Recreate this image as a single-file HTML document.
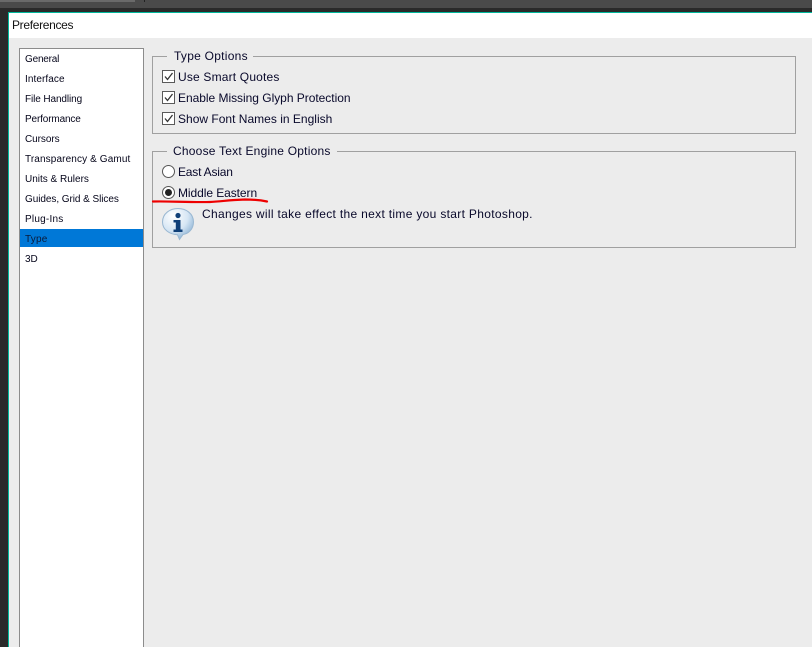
<!DOCTYPE html>
<html><head><meta charset="utf-8">
<style>
html,body{margin:0;padding:0;}
body{width:812px;height:647px;overflow:hidden;position:relative;background:#2a2a2a;font-family:"Liberation Sans",sans-serif;color:#000;}
.a{position:absolute;box-sizing:border-box;}
.t{position:absolute;white-space:nowrap;font-size:12px;line-height:14px;color:#08082a;}
.l{position:absolute;left:25px;white-space:nowrap;font-size:10px;line-height:12px;color:#05051a;}
.g{position:absolute;border:1px solid #a0a0a0;box-sizing:border-box;}
.c{position:absolute;left:162px;width:13px;height:13px;box-sizing:border-box;border:1px solid #5a5a5a;background:#fff;}
</style></head><body>
<div class="a" style="left:0;top:0;width:812px;height:8px;background:#4a4a4a"></div>
<div class="a" style="left:0;top:0;width:135px;height:2px;background:#6a6a6a"></div>
<div class="a" style="left:144px;top:0;width:1px;height:2px;background:#222"></div>
<div class="a" style="left:0;top:8px;width:812px;height:4px;background:#2a2a2a"></div>
<div class="a" style="left:8px;top:12px;width:804px;height:635px;background:#ececec;border-left:1px solid #00b89c;border-top:1px solid #00b89c"></div>
<div class="a" style="left:9px;top:13px;width:803px;height:25px;background:#fff"></div>
<div class="t" style="left:12px;top:18px;letter-spacing:-.32px;color:#111">Preferences</div>

<div class="a" style="left:19px;top:48px;width:125px;height:599px;background:#fff;border:1px solid #8c8c8c;border-bottom:0"></div>
<div class="a" style="left:20px;top:229px;width:123px;height:18px;background:#0078d7"></div>
<div class="l" style="top:54px;letter-spacing:-.2px">General</div>
<div class="l" style="top:74px;letter-spacing:.08px">Interface</div>
<div class="l" style="top:94px;letter-spacing:-.1px">File Handling</div>
<div class="l" style="top:114px;letter-spacing:-.14px">Performance</div>
<div class="l" style="top:134px;letter-spacing:-.06px">Cursors</div>
<div class="l" style="top:154px;letter-spacing:.12px">Transparency &amp; Gamut</div>
<div class="l" style="top:174px;letter-spacing:0">Units &amp; Rulers</div>
<div class="l" style="top:194px;letter-spacing:-.06px">Guides, Grid &amp; Slices</div>
<div class="l" style="top:214px;letter-spacing:.22px">Plug-Ins</div>
<div class="l" style="top:234px;letter-spacing:.22px;color:#0a1a3a">Type</div>
<div class="l" style="top:254px;letter-spacing:0">3D</div>

<div class="g" style="left:152px;top:56px;width:644px;height:78px"></div>
<div class="a" style="left:167px;top:50px;width:86px;height:12px;background:#ececec"></div>
<div class="t" style="left:174px;top:49px;letter-spacing:.26px">Type Options</div>

<div class="c" style="top:70px"><svg width="11" height="11" style="display:block"><path d="M2 5.5L4.5 8.5L9.5 2" fill="none" stroke="#333" stroke-width="1.3"/></svg></div>
<div class="c" style="top:91px"><svg width="11" height="11" style="display:block"><path d="M2 5.5L4.5 8.5L9.5 2" fill="none" stroke="#333" stroke-width="1.3"/></svg></div>
<div class="c" style="top:112px"><svg width="11" height="11" style="display:block"><path d="M2 5.5L4.5 8.5L9.5 2" fill="none" stroke="#333" stroke-width="1.3"/></svg></div>
<div class="t" style="left:178px;top:70px;letter-spacing:.18px">Use Smart Quotes</div>
<div class="t" style="left:178px;top:91px;letter-spacing:-.03px">Enable Missing Glyph Protection</div>
<div class="t" style="left:178px;top:112px;letter-spacing:.01px">Show Font Names in English</div>

<div class="g" style="left:152px;top:151px;width:644px;height:97px"></div>
<div class="a" style="left:167px;top:145px;width:170px;height:12px;background:#ececec"></div>
<div class="t" style="left:173px;top:144px;letter-spacing:.22px">Choose Text Engine Options</div>

<svg class="a" style="left:160px;top:163px" width="20" height="40">
<circle cx="8.5" cy="8.5" r="6" fill="#fff" stroke="#555" stroke-width="1"/>
<circle cx="8.5" cy="29.5" r="6" fill="#fff" stroke="#555" stroke-width="1"/>
<circle cx="8.5" cy="29.5" r="3.5" fill="#222"/>
</svg>
<div class="t" style="left:178px;top:165px;letter-spacing:-.2px">East Asian</div>
<div class="t" style="left:178px;top:186px;letter-spacing:-.07px">Middle Eastern</div>

<svg class="a" style="left:150px;top:196px" width="125" height="10">
<path d="M3 5.5C20 5 38 6.5 60 6C72 5.5 78 4 95 3.5C103 3.5 110 4 117 5.5" fill="none" stroke="#ee0000" stroke-width="2.2" stroke-linecap="round"/>
</svg>

<svg class="a" style="left:161px;top:207px" width="34" height="34" viewBox="0 0 34 34">
<defs>
<radialGradient id="b" cx="35%" cy="25%" r="85%"><stop offset="0" stop-color="#ffffff"/><stop offset=".55" stop-color="#d6e6f4"/><stop offset="1" stop-color="#7fa9cf"/></radialGradient>
</defs>
<path d="M17 1.5C25 1.5 32.5 6.5 32.5 15C32.5 23 26.5 27 22 27.5L18.5 32.5L16.5 27.8C9 27.5 1.5 23 1.5 15C1.5 6.5 9 1.5 17 1.5Z" fill="url(#b)" stroke="#9ab8d2" stroke-width="1"/>
<circle cx="17" cy="8.5" r="2.6" fill="#0f3f78"/>
<path d="M12.5 13H19.5V22.5H21.5V25H12.5V22.5H14.8V15.5H12.5Z" fill="#0f3f78"/>
</svg>
<div class="t" style="left:202px;top:207px;letter-spacing:.32px">Changes will take effect the next time you start Photoshop.</div>
</body></html>
